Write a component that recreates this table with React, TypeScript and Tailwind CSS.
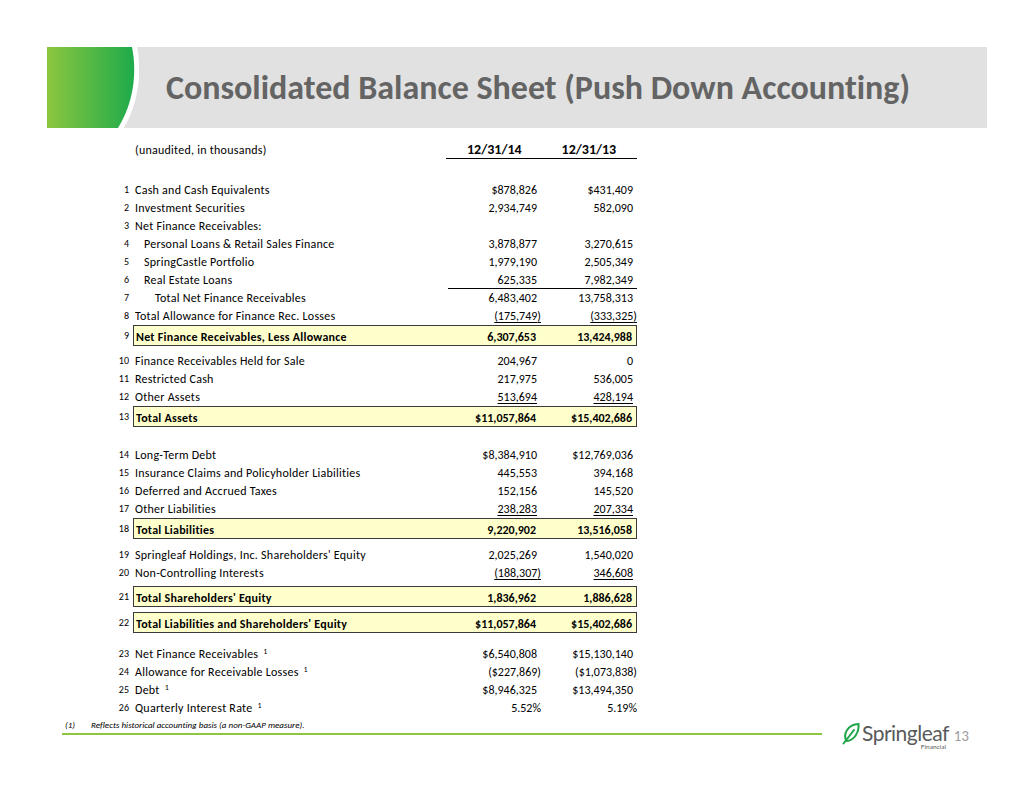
import React from 'react';

type R = {
  n: string;
  label: string;
  a?: string;
  b?: string;
  indent?: string;
  ul?: boolean;
  rule?: boolean;
  sup?: boolean;
  box?: boolean;
  mt?: string;
};

const rows: R[] = [
  { n: '1', label: 'Cash and Cash Equivalents', a: '$878,826', b: '$431,409' },
  { n: '2', label: 'Investment Securities', a: '2,934,749', b: '582,090' },
  { n: '3', label: 'Net Finance Receivables:' },
  { n: '4', label: 'Personal Loans & Retail Sales Finance', a: '3,878,877', b: '3,270,615', indent: 'pl-[11px]' },
  { n: '5', label: 'SpringCastle Portfolio', a: '1,979,190', b: '2,505,349', indent: 'pl-[11px]' },
  { n: '6', label: 'Real Estate Loans', a: '625,335', b: '7,982,349', indent: 'pl-[11px]', rule: true },
  { n: '7', label: 'Total Net Finance Receivables', a: '6,483,402', b: '13,758,313', indent: 'pl-[22px]' },
  { n: '8', label: 'Total Allowance for Finance Rec. Losses', a: '(175,749)', b: '(333,325)', ul: true },
  { n: '9', label: 'Net Finance Receivables, Less Allowance', a: '6,307,653', b: '13,424,988', box: true },
  { n: '10', label: 'Finance Receivables Held for Sale', a: '204,967', b: '0', mt: 'mt-[6px]' },
  { n: '11', label: 'Restricted Cash', a: '217,975', b: '536,005' },
  { n: '12', label: 'Other Assets', a: '513,694', b: '428,194', ul: true },
  { n: '13', label: 'Total Assets', a: '$11,057,864', b: '$15,402,686', box: true },
  { n: '14', label: 'Long-Term Debt', a: '$8,384,910', b: '$12,769,036', mt: 'mt-[19px]' },
  { n: '15', label: 'Insurance Claims and Policyholder Liabilities', a: '445,553', b: '394,168' },
  { n: '16', label: 'Deferred and Accrued Taxes', a: '152,156', b: '145,520' },
  { n: '17', label: 'Other Liabilities', a: '238,283', b: '207,334', ul: true },
  { n: '18', label: 'Total Liabilities', a: '9,220,902', b: '13,516,058', box: true },
  { n: '19', label: "Springleaf Holdings, Inc. Shareholders' Equity", a: '2,025,269', b: '1,540,020', mt: 'mt-[7px]' },
  { n: '20', label: 'Non-Controlling Interests', a: '(188,307)', b: '346,608', ul: true },
  { n: '21', label: "Total Shareholders' Equity", a: '1,836,962', b: '1,886,628', box: true, mt: 'mt-[4px]' },
  { n: '22', label: "Total Liabilities and Shareholders' Equity", a: '$11,057,864', b: '$15,402,686', box: true, mt: 'mt-[5px]' },
  { n: '23', label: 'Net Finance Receivables', a: '$6,540,808', b: '$15,130,140', sup: true, mt: 'mt-[12px]' },
  { n: '24', label: 'Allowance for Receivable Losses', a: '($227,869)', b: '($1,073,838)', sup: true },
  { n: '25', label: 'Debt', a: '$8,946,325', b: '$13,494,350', sup: true },
  { n: '26', label: 'Quarterly Interest Rate', a: '5.52%', b: '5.19%', sup: true },
];

// trailing ")" or "%" hangs into the right padding like an accounting format
function Val({ v, w, ul }: { v?: string; w: string; ul?: boolean }) {
  const tail = v && /[)%]$/.test(v) ? v.slice(-1) : '';
  const body = v ? (tail ? v.slice(0, -1) : v) : '';
  return (
    <div className={`${w} flex justify-end pr-[4px] tracking-normal`}>
      {v && (
        <span className={ul ? 'underline decoration-1 underline-offset-[2px]' : ''}>
          {body}
          {tail && <span className="-mr-[4px]">{tail}</span>}
        </span>
      )}
    </div>
  );
}

function Row({ r }: { r: R }) {
  return (
    <div className={`flex ${r.box ? 'h-[21px]' : 'h-[18px]'} ${r.mt ?? ''}`}>
      <div className="w-[30px] self-center text-right text-[10px] leading-none">{r.n}</div>
      <div
        className={`ml-[4px] flex flex-1 items-center ${
          r.box ? 'border border-[#3a3a3a] bg-[#ffffcc] pt-[2px] font-bold' : ''
        }`}
      >
        <div className={`flex-1 whitespace-nowrap pl-[2px] tracking-[0.25px] ${r.indent ?? ''}`}>
          {r.label}
          {r.sup && <sup className="ml-[5px] text-[8px]">1</sup>}
        </div>
        <div className={`flex w-[189px] items-center self-stretch ${r.rule ? 'border-b border-black' : ''}`}>
          <Val v={r.a} w="w-[93px]" ul={r.ul} />
          <Val v={r.b} w="w-[96px]" ul={r.ul} />
        </div>
      </div>
    </div>
  );
}

function Leaf() {
  return (
    <svg width="18" height="23" viewBox="0 0 18 23" fill="none">
      <path d="M4.5 19 C0.5 12 6 2.5 16.5 2 C17.5 10.5 12 18.5 4.5 19 Z" stroke="#1fa64a" strokeWidth="2" />
      <path d="M1.5 21.5 L12 8" stroke="#1fa64a" strokeWidth="2" strokeLinecap="round" />
    </svg>
  );
}

export default function App() {
  return (
    <div className="flex h-[799px] w-[1034px] flex-col overflow-hidden bg-white font-[family-name:Carlito,Lato,sans-serif] text-[12px] text-black [font-variant-ligatures:none]">
      {/* title band */}
      <div className="ml-[47px] mt-[47px] flex h-[81px] w-[940px] items-center bg-[#e1e1e1]">
        <svg width="92" height="81" viewBox="0 0 92 81" className="shrink-0">
          <defs>
            <linearGradient id="g" x1="0" x2="1" y1="0" y2="0">
              <stop offset="0" stopColor="#8cc63f" />
              <stop offset="1" stopColor="#1eab4b" />
            </linearGradient>
          </defs>
          <path d="M85 0 C90 25 87 55 71 81" stroke="#ffffff" strokeWidth="10" fill="none" />
          <path d="M0 0 H85 C90 25 87 55 71 81 H0 Z" fill="url(#g)" />
        </svg>
        <h1 className="ml-[27px] whitespace-nowrap text-[34px] font-bold text-[#646464]">
          Consolidated Balance Sheet (Push Down Accounting)
        </h1>
      </div>

      {/* table */}
      <div className="ml-[99px] mt-[13px] w-[538px]">
        <div className="flex h-[18px] items-center">
          <div className="w-[34px]" />
          <div className="flex-1 pl-[2px] tracking-[0.25px]">(unaudited, in thousands)</div>
          <div className="flex w-[191px] items-center self-stretch border-b-[1.5px] border-black text-[14px] font-bold">
            <span className="ml-[21px]">12/31/14</span>
            <span className="ml-[40px]">12/31/13</span>
          </div>
        </div>
        <div className="h-[22px]" />
        {rows.map((r) => (
          <Row key={r.n} r={r} />
        ))}
      </div>

      {/* footer */}
      <div className="mt-[2px] flex items-start">
        <div className="ml-[62px] w-[760px]">
          <div className="flex h-[12px] items-center pl-[3px] text-[9px] italic">
            <span>(1)</span>
            <span className="ml-[16px]">Reflects historical accounting basis (a non-GAAP measure).</span>
          </div>
          <div className="mt-[2px] h-[2px] bg-[#8dc63f]" />
        </div>
        <div className="ml-[20px] mt-[3px] flex items-start">
          <Leaf />
          <div className="ml-[2px] flex flex-col items-end">
            <span className="font-[family-name:Lato,sans-serif] text-[21px] leading-[21px] tracking-[-0.5px] text-[#58595b]">
              Springleaf
            </span>
            <span className="mr-[3px] font-[family-name:Lato,sans-serif] text-[6.5px] leading-[7px] text-[#58595b]">
              Financial
            </span>
          </div>
          <span className="ml-[5px] mt-[8px] font-[family-name:Lato,sans-serif] text-[13px] leading-[13px] text-[#9a9a9a]">
            13
          </span>
        </div>
      </div>
    </div>
  );
}
